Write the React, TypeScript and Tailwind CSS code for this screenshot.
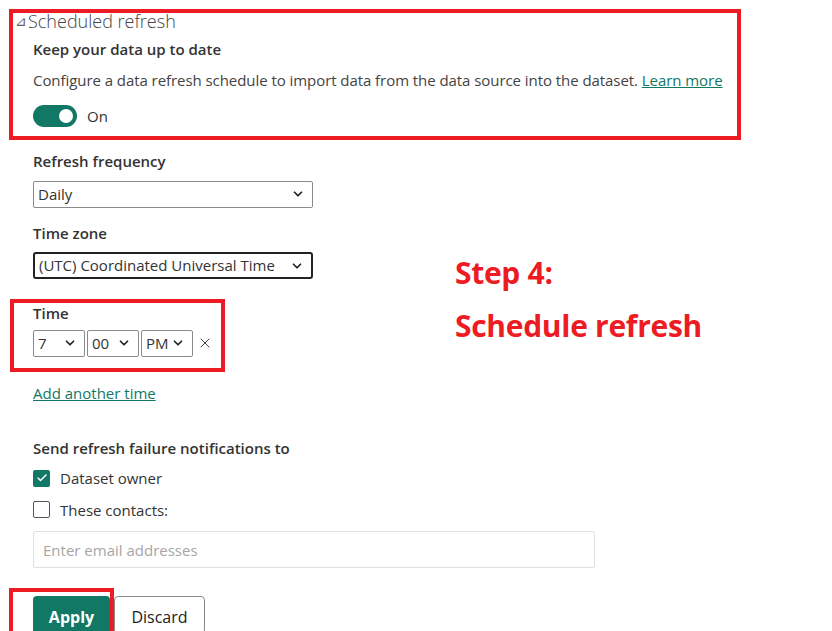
import React, { useState } from 'react';
import { ChevronDown, X, Check } from 'lucide-react';

const ui = { fontFamily: '"Open Sans", "Noto Sans", sans-serif' };
const note = { fontFamily: '"Open Sans", "Liberation Sans", sans-serif' };

function Select({ value, width, strong }: { value: string; width: string; strong?: boolean }) {
  return (
    <div
      className={`${width} h-[27px] flex items-center justify-between pl-[4px] pr-[7px] bg-white text-[15px] text-[#333] ${
        strong ? 'border-2 border-[#222] rounded-[3px]' : 'border border-[#8a8a8a] rounded-[2px]'
      }`}
    >
      <span className="whitespace-nowrap">{value}</span>
      <ChevronDown className="w-[14px] h-[14px] text-[#222]" strokeWidth={3} />
    </div>
  );
}

export default function App() {
  const [on, setOn] = useState(true);
  const [owner, setOwner] = useState(true);
  const [contacts, setContacts] = useState(false);

  return (
    <div className="w-[832px] h-[631px] overflow-hidden bg-white pl-[9px] pt-[9px] text-[#333]" style={ui}>
      {/* Scheduled refresh header box */}
      <div className="w-[732px] h-[131px] border-[4px] border-[#ed1c24] pl-[2px]">
        <div className="flex items-center h-[16px] text-[18px] font-light text-[#444] leading-none">
          <span className="text-[14px] mr-[1px] text-[#666]">⊿</span>
          <span>Scheduled refresh</span>
        </div>
        <div className="pl-[18px]">
          <div className="mt-[9px] text-[15px] font-semibold text-[#333]">Keep your data up to date</div>
          <div className="mt-[8px] text-[15px] text-[#444] whitespace-nowrap tracking-[-0.06px]">
            Configure a data refresh schedule to import data from the data source into the dataset.{' '}
            <span className="text-[#117865] underline">Learn more</span>
          </div>
          <div className="mt-[14px] flex items-center gap-[10px]">
            <button
              onClick={() => setOn(!on)}
              className={`w-[44px] h-[22px] rounded-full flex items-center px-[4px] ${
                on ? 'bg-[#117865] justify-end' : 'bg-white border border-[#333] justify-start'
              }`}
            >
              <span className={`w-[14px] h-[14px] rounded-full ${on ? 'bg-white' : 'bg-[#333]'}`} />
            </button>
            <span className="text-[15px] text-[#333]">{on ? 'On' : 'Off'}</span>
          </div>
        </div>
      </div>

      <div className="flex">
        <div className="w-[440px] shrink-0">
          {/* Frequency */}
          <div className="pl-[24px]">
            <div className="mt-[10px] text-[15px] font-semibold">Refresh frequency</div>
            <div className="mt-[8px]">
              <Select value="Daily" width="w-[280px]" />
            </div>
            <div className="mt-[14px] text-[15px] font-semibold">Time zone</div>
            <div className="mt-[8px]">
              <Select value="(UTC) Coordinated Universal Time" width="w-[280px]" strong />
            </div>
          </div>

          {/* Time box */}
          <div className="mt-[20px] ml-[1px] w-[215px] h-[73px] border-[4px] border-[#ed1c24] pl-[19px]">
            <div className="-mt-[1px] text-[15px] font-semibold">Time</div>
            <div className="mt-[5px] flex items-center gap-[2px]">
              <Select value="7" width="w-[52px]" />
              <Select value="00" width="w-[52px]" />
              <Select value="PM" width="w-[52px]" />
              <X className="ml-[2px] w-[16px] h-[16px] text-[#444]" strokeWidth={1.5} />
            </div>
          </div>

          <div className="pl-[24px]">
            <div className="mt-[10px] text-[15px] text-[#117865] underline">Add another time</div>

            <div className="mt-[32px] text-[15px] font-semibold">Send refresh failure notifications to</div>
            <label className="mt-[8px] flex items-center gap-[10px] cursor-pointer" onClick={() => setOwner(!owner)}>
              <span
                className={`w-[17px] h-[17px] rounded-[2px] flex items-center justify-center ${
                  owner ? 'bg-[#117865]' : 'border border-[#333] bg-white'
                }`}
              >
                {owner && <Check className="w-[12px] h-[12px] text-white" strokeWidth={3} />}
              </span>
              <span className="text-[15px] text-[#333]">Dataset owner</span>
            </label>
            <label className="mt-[9px] flex items-center gap-[10px] cursor-pointer" onClick={() => setContacts(!contacts)}>
              <span
                className={`w-[17px] h-[17px] rounded-[2px] flex items-center justify-center ${
                  contacts ? 'bg-[#117865]' : 'border border-[#555] bg-white'
                }`}
              >
                {contacts && <Check className="w-[12px] h-[12px] text-white" strokeWidth={3} />}
              </span>
              <span className="text-[15px] text-[#333]">These contacts:</span>
            </label>
          </div>
        </div>

        {/* Annotation */}
        <div className="pt-[106px] pl-[6px] text-[#ed1c24] font-bold text-[30px] leading-[53px] tracking-[-0.3px]" style={note}>
          <div>Step 4:</div>
          <div>Schedule refresh</div>
        </div>
      </div>

      <div className="pl-[24px]">
        <input
          placeholder="Enter email addresses"
          className="mt-[10px] w-[562px] h-[37px] border border-[#e1e1e1] rounded-[2px] px-[9px] text-[15px] placeholder:text-[#a6a6a6] outline-none"
          style={ui}
        />
      </div>

      <div className="mt-[20px] flex items-start">
        <div className="w-[105px] h-[60px] border-[4px] border-[#ed1c24] border-b-0 pl-[20px] pt-[4px]">
          <button className="w-[77px] h-[38px] bg-[#117865] text-white text-[16px] font-bold rounded-t-[4px] pt-[4px]">Apply</button>
        </div>
        <button className="mt-[8px] w-[91px] h-[38px] border border-[#8a8a8a] rounded-[4px] bg-white text-[16px] font-normal text-[#222] pt-[4px]">
          Discard
        </button>
      </div>
    </div>
  );
}
